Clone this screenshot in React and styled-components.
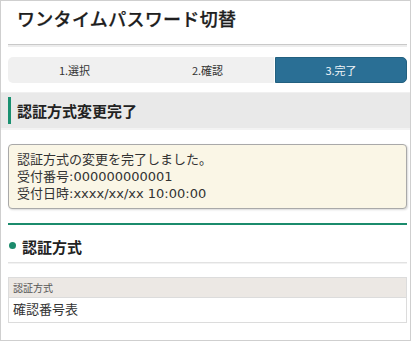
import React from "react";
import styled, { createGlobalStyle } from "styled-components";

const Global = createGlobalStyle`
  html, body { margin: 0; padding: 0; background: #fff; }
  body { font-family: "Noto Sans CJK JP", "Noto Sans", sans-serif; color: #222; }
  * { box-sizing: border-box; }
`;

const Frame = styled.div`
  width: 411px;
  height: 341px;
  border: 1px solid #cfcfcf;
  background: #fff;
  overflow: hidden;
`;

const Inset = styled.div`
  padding: 0 3px 0 7px;
`;

const TitleBox = styled.div`
  padding-top: 5px;
  height: 44px;
  border-bottom: 1px solid #c9c9c9;
  box-shadow: 0 2px 0 #ededed;
`;

const Title = styled.h1`
  margin: 0 0 0 9px;
  font-size: 18px;
  line-height: 24px;
  font-weight: 500;
  letter-spacing: 0.3px;
  color: #1e1e1e;
  -webkit-text-stroke: 0.25px #1e1e1e;
`;

const Steps = styled.ol`
  list-style: none;
  margin: 12px 0 0;
  padding: 0;
  display: grid;
  grid-template-columns: 1fr 1fr 1fr;
  height: 26px;
`;

const Step = styled.li`
  display: flex;
  align-items: center;
  justify-content: center;
  font-size: 11px;
  background: ${(p) => (p.$active ? "#2a6f95" : "#f0f0f0")};
  color: ${(p) => (p.$active ? "#eef4f8" : "#333")};
  border: ${(p) => (p.$active ? "1px solid #22607f" : "none")};
  margin-left: ${(p) => (p.$active ? "1px" : "0")};
  &:first-child { border-radius: 5px 0 0 5px; }
  &:last-child { border-radius: 0 5px 5px 0; }
`;

const Band = styled.div`
  margin-top: 9px;
  height: 36px;
  background: #e9e9e9;
  border-top: 1px solid #f0f0f0;
  box-shadow: 0 2px 0 #f3f3f3;
  display: flex;
  align-items: center;
  padding-left: 7px;
`;

const BandTitle = styled.h2`
  margin: 0;
  font-size: 15px;
  font-weight: 700;
  color: #222;
  line-height: 27px;
  padding-left: 6px;
  border-left: 3px solid #1a9171;
`;

const Notice = styled.div`
  margin-top: 16px;
  background: #faf6e6;
  border: 1px solid #a9a9a9;
  border-radius: 4px;
  box-shadow: 1px 1px 2px rgba(0, 0, 0, 0.15);
  padding: 6px 8px 6px;
  font-family: "DejaVu Sans", "Noto Sans CJK JP", sans-serif;
  font-size: 13px;
  line-height: 17px;
  color: #333;
`;

const SectionHead = styled.div`
  margin-top: 14px;
  border-top: 2px solid #1b8b6c;
  height: 40px;
  border-bottom: 1px solid #e2e2e2;
  box-shadow: 0 1px 0 #f2f2f2;
  display: flex;
  align-items: center;
  gap: 6px;
  padding-left: 1px;
`;

const Dot = styled.span`
  width: 7px;
  height: 7px;
  border-radius: 50%;
  background: #1b8b6c;
  margin-top: 3px;
`;

const SectionTitle = styled.h3`
  margin: 6px 0 0;
  font-size: 15px;
  font-weight: 700;
  color: #222;
`;

const Table = styled.dl`
  margin: 14px 0 0;
  border: 1px solid #dcdcdc;
`;

const Label = styled.dt`
  height: 20px;
  background: #ece8e4;
  border-bottom: 1px solid #dcdcdc;
  font-size: 10px;
  line-height: 19px;
  color: #555;
  padding-left: 4px;
`;

const Value = styled.dd`
  margin: 0;
  height: 24px;
  font-size: 13px;
  line-height: 22px;
  color: #333;
  padding-left: 4px;
`;

export default function App() {
  return (
    <>
      <Global />
      <Frame>
        <Inset>
          <TitleBox>
            <Title>ワンタイムパスワード切替</Title>
          </TitleBox>
          <Steps>
            <Step>1.選択</Step>
            <Step>2.確認</Step>
            <Step $active>3.完了</Step>
          </Steps>
        </Inset>
        <Band>
          <BandTitle>認証方式変更完了</BandTitle>
        </Band>
        <Inset>
          <Notice>
            認証方式の変更を完了しました。
            <br />
            受付番号:000000000001
            <br />
            受付日時:xxxx/xx/xx 10:00:00
          </Notice>
          <SectionHead>
            <Dot />
            <SectionTitle>認証方式</SectionTitle>
          </SectionHead>
          <Table>
            <Label>認証方式</Label>
            <Value>確認番号表</Value>
          </Table>
        </Inset>
      </Frame>
    </>
  );
}
